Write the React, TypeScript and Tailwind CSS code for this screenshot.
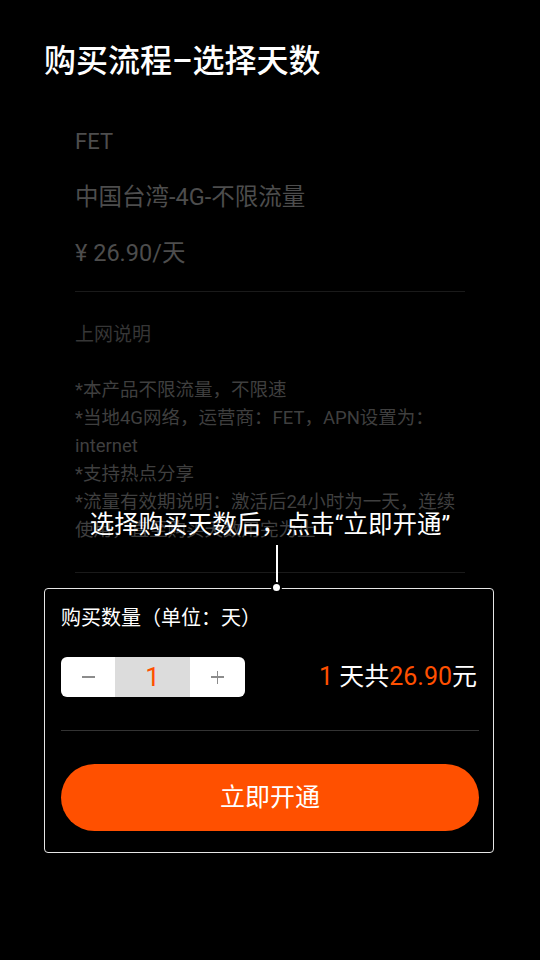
import React from 'react';

const FONT = "font-['Roboto','Noto_Sans_CJK_SC',sans-serif]";

const notes = [
  '*本产品不限流量，不限速',
  '*当地4G网络，运营商：FET，APN设置为：',
  'internet',
  '*支持热点分享',
  '*流量有效期说明：激活后24小时为一天，连续',
  '使用，直至购买天数用完为止',
];

export default function App() {
  return (
    <div className={`${FONT} w-[540px] min-h-[960px] bg-black text-white`}>
      {/* Page title */}
      <div className="pt-[41px] pl-[44px]">
        <h1 className="text-[32px] leading-[40px] font-medium text-white whitespace-nowrap">
          购买流程–选择天数
        </h1>
      </div>

      {/* Dimmed product info */}
      <div className="px-[75px]">
        <div className="mt-[45px] text-[22px] leading-[32px] text-[#4d4d4d]">FET</div>
        <div className="mt-[23px] text-[23.5px] leading-[32px] text-[#4d4d4d] whitespace-nowrap">
          中国台湾-4G-不限流量
        </div>
        <div className="mt-[24px] text-[23.5px] leading-[32px] text-[#4d4d4d]">¥ 26.90/天</div>
        <div className="mt-[22px] h-px bg-[#1a1a1a]" />

        <div className="mt-[29px] text-[19px] leading-[28px] text-[#363636]">上网说明</div>
        <div className="mt-[27px] text-[18.5px] leading-[28px] text-[#3f3f3f]">
          {notes.map((line) => (
            <div key={line} className="whitespace-nowrap">
              {line}
            </div>
          ))}
        </div>
        <div className="mt-[28px] h-px bg-[#1a1a1a]" />
      </div>

      {/* Highlighted purchase panel */}
      <div className="relative mt-[15px] ml-[44px] w-[450px] border border-[#e6e6e6] rounded-[4px] pl-[16px] pr-[14px] pt-[15px] pb-[21px]">
        {/* Guide caption */}
        <div className="absolute left-0 right-0 top-[-77px] text-center text-[24.5px] leading-[26px] text-white whitespace-nowrap pl-[2px]">
          选择购买天数后，点击“立即开通”
        </div>
        <span className="absolute left-[231px] top-[-44px] w-[2px] h-[44px] bg-white" />
        <span className="absolute left-[226px] top-[-7px] w-[11px] h-[11px] rounded-full bg-white border-2 border-black" />

        <div className="text-[20px] leading-[28px] text-white">购买数量（单位：天）</div>

        <div className="mt-[25px] flex items-center justify-between">
          <div className="flex h-[40px] w-[184px] rounded-[6px] bg-white overflow-hidden">
            <button className="w-[54px] flex items-center justify-center">
              <span className="w-[13px] h-[1.5px] bg-[#8c8c8c]" />
            </button>
            <div className="w-[75px] bg-[#dcdcdc] flex items-center justify-center text-[26px] text-[#ff5000]">
              1
            </div>
            <button className="flex-1 flex items-center justify-center">
              <span className="relative w-[13px] h-[13px]">
                <span className="absolute left-0 top-[5.75px] w-[13px] h-[1.5px] bg-[#8c8c8c]" />
                <span className="absolute top-0 left-[5.75px] h-[13px] w-[1.5px] bg-[#8c8c8c]" />
              </span>
            </button>
          </div>
          <div className="text-[25px] leading-[32px] whitespace-nowrap pr-[2px]">
            <span className="text-[#ff5000]">1 </span>
            <span className="text-white">天共</span>
            <span className="text-[#ff5000]">26.90</span>
            <span className="text-white">元</span>
          </div>
        </div>

        <div className="mt-[33px] h-px bg-[#333333]" />

        <button className="mt-[33px] w-full h-[67px] rounded-full bg-[#ff5000] text-white text-[25px] flex items-center justify-center">
          立即开通
        </button>
      </div>
    </div>
  );
}
